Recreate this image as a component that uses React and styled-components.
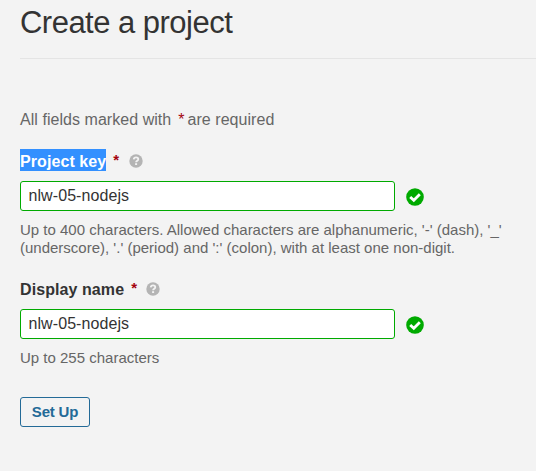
import React from 'react';
import styled, { createGlobalStyle } from 'styled-components';

const Global = createGlobalStyle`
  *, *::before, *::after { box-sizing: border-box; }
  body { margin: 0; background: #f3f3f3; font-family: "Liberation Sans", Arial, sans-serif; color: #333; }
`;
const Page = styled.main`
  display: flow-root;
  min-height: 471px;
  padding-left: 20px;
  overflow: hidden;
`;
const Header = styled.header`
  height: 59px;
  padding-top: 5px;
  border-bottom: 1px solid #e4e4e4;
`;
const Title = styled.h1`
  margin: 0;
  font-size: 31px;
  line-height: 36px;
  font-weight: 400;
  letter-spacing: -0.52px;
`;
const Note = styled.p`
  margin: 51px 0 0;
  font-size: 16px;
  line-height: 20px;
  letter-spacing: 0.045px;
  color: #666;
  white-space: nowrap;
`;
const Required = styled.em`
  margin: ${(p) => (p.$inline ? '0 -1.5px 0 2.5px' : '0')};
  font-style: normal;
  font-size: ${(p) => (p.$inline ? '16px' : '15px')};
  line-height: 20px;
  color: #a4030f;
`;
const Field = styled.div`
  margin-top: ${(p) => p.$gap}px;
`;
const LabelRow = styled.div`
  display: flex;
  align-items: center;
  height: 22px;
  font-size: 16px;
  font-weight: 700;
`;
const LabelText = styled.label`
  display: block;
  height: 22px;
  padding-top: 2px;
  line-height: 22px;
  margin-right: 7px;
  letter-spacing: 0.08px;
  color: ${(p) => (p.$selected ? '#fff' : '#333')};
  background: ${(p) => (p.$selected ? '#3390ff' : 'transparent')};
`;
const HelpIcon = styled.svg`
  width: 14px;
  height: 14px;
  margin-left: 9.5px;
  margin-top: 2px;
`;
const InputRow = styled.div`
  display: flex;
  align-items: center;
  gap: 11px;
  margin-top: 10px;
`;
const Input = styled.input`
  width: 375px;
  height: 30px;
  padding: 0 7.5px;
  border: 1px solid #0a0;
  border-radius: 3px;
  background: #fff;
  color: #333;
  font: 16px "Liberation Sans", Arial, sans-serif;
  letter-spacing: 0.08px;
  outline: none;
`;
const CheckIcon = styled.svg`
  width: 18px;
  height: 18px;
  margin-top: 2px;
`;
const Hint = styled.p`
  margin: 10px 0 0;
  font-size: 15px;
  line-height: 18px;
  color: #666;
  white-space: nowrap;
`;
const Button = styled.button`
  display: block;
  width: 70px;
  height: 30px;
  margin-top: 30px;
  padding: 0;
  border: 1px solid #236a97;
  border-radius: 3px;
  background: transparent;
  color: #236a97;
  font: 700 15px/28px "Liberation Sans", Arial, sans-serif;
  letter-spacing: -0.2px;
`;

function Help() {
  return (
    <HelpIcon viewBox="0 0 14 14" aria-label="Help">
      <circle cx="7" cy="7" r="6.7" fill="#b4b4b4" />
      <path d="M4.7 5.4C4.9 4 5.8 3.3 7 3.3c1.2 0 2.3.7 2.3 1.9 0 1.6-2.2 1.5-2.2 3.1" fill="none" stroke="#f3f3f3" strokeWidth="1.8" />
      <rect x="6.1" y="9.2" width="2" height="1.8" fill="#f3f3f3" />
    </HelpIcon>
  );
}

function FormField({ id, label, value, gap, selected, children }) {
  return (
    <Field $gap={gap}>
      <LabelRow>
        <LabelText htmlFor={id} $selected={selected}>{label}</LabelText>
        <Required>*</Required>
        <Help />
      </LabelRow>
      <InputRow>
        <Input id={id} defaultValue={value} spellCheck={false} />
        <CheckIcon viewBox="0 0 18 18" aria-label="Valid">
          <circle cx="9" cy="9" r="8.8" fill="#0a0" />
          <path d="M4.2 8.9 7.8 12.3 13.8 6.3" fill="none" stroke="#fff" strokeWidth="2.8" />
        </CheckIcon>
      </InputRow>
      <Hint>{children}</Hint>
    </Field>
  );
}

export default function App() {
  return (
    <>
      <Global />
      <Page>
        <Header><Title>Create a project</Title></Header>
        <Note>All fields marked with <Required $inline>*</Required> are required</Note>
        <FormField id="key" label="Project key" value="nlw-05-nodejs" gap={19} selected>
          Up to 400 characters. Allowed characters are alphanumeric, '-' (dash), '_'<br />
          (underscore), '.' (period) and ':' (colon), with at least one non-digit.
        </FormField>
        <FormField id="name" label="Display name" value="nlw-05-nodejs" gap={20}>
          Up to 255 characters
        </FormField>
        <Button type="button">Set Up</Button>
      </Page>
    </>
  );
}
